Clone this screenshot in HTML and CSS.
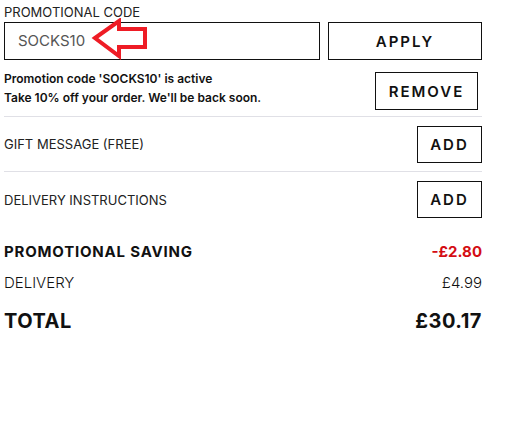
FILE: index.html
```html
<!DOCTYPE html>
<html>
<head>
<meta charset="utf-8">
<link rel="stylesheet" href="styles.css">
</head>
<body>
<div class="panel">
  <div class="promo">
    <div class="label">PROMOTIONAL CODE</div>
    <div class="promo-row">
      <div class="input-wrap">
        <div class="input">SOCKS10</div>
        <svg class="arrow" width="60" height="44" viewBox="0 0 60 44">
          <path d="M4 20 L28 3 L28 11 L54 11 L54 29 L28 29 L28 38 Z" fill="none" stroke="#ee1c25" stroke-width="4" stroke-linejoin="miter"/>
        </svg>
      </div>
      <button class="btn apply">APPLY</button>
    </div>
  </div>
  <div class="row active">
    <div class="active-text">
      <div>Promotion code 'SOCKS10' is active</div>
      <div>Take 10% off your order. We'll be back soon.</div>
    </div>
    <button class="btn remove">REMOVE</button>
  </div>
  <div class="row option">
    <span class="opt-label">GIFT MESSAGE (FREE)</span>
    <button class="btn add">ADD</button>
  </div>
  <div class="row option last">
    <span class="opt-label">DELIVERY INSTRUCTIONS</span>
    <button class="btn add">ADD</button>
  </div>
  <div class="summary">
    <div class="sum-row saving"><span>PROMOTIONAL SAVING</span><span class="red">-£2.80</span></div>
    <div class="sum-row delivery"><span>DELIVERY</span><span>£4.99</span></div>
    <div class="sum-row total"><span>TOTAL</span><span>£30.17</span></div>
  </div>
</div>
</body>
</html>
```
FILE: styles.css
```css
html, body {
  margin: 0;
  padding: 0;
  background: #fff;
}
body {
  font-family: Inter, "DejaVu Sans", sans-serif;
  color: #111;
}
.panel {
  width: 478px;
  margin-left: 4px;
}
.label {
  font-size: 13px;
  line-height: 16px;
  padding-top: 4px;
  height: 18px;
  color: #222;
}
.promo-row {
  display: flex;
  gap: 8px;
  height: 38px;
}
.input-wrap {
  position: relative;
  width: 316px;
}
.input {
  box-sizing: border-box;
  height: 38px;
  border: 1.5px solid #111;
  padding-left: 13px;
  font-size: 15px;
  line-height: 35px;
  color: #555;
}
.arrow {
  position: absolute;
  left: 87px;
  top: -4px;
}
.btn {
  box-sizing: border-box;
  background: #fff;
  border: 1.5px solid #111;
  font-family: Inter, "DejaVu Sans", sans-serif;
  font-weight: 600;
  color: #111;
  letter-spacing: 2px;
  padding: 0;
  margin: 0;
}
.apply {
  width: 154px;
  height: 38px;
  font-size: 15px;
}
.row {
  display: flex;
  align-items: center;
  justify-content: space-between;
  border-bottom: 1px solid #e0e0e6;
}
.active {
  box-sizing: border-box;
  align-items: flex-start;
  padding-top: 12px;
  height: 57px;
}
.active-text {
  font-size: 12px;
  font-weight: 600;
  line-height: 19px;
  margin-top: -3px;
}
.remove {
  width: 103px;
  height: 38px;
  font-size: 15px;
  margin-right: 4px;
}
.option {
  height: 55px;
  box-sizing: border-box;
}
.option.last {
  border-bottom: none;
}
.opt-label {
  font-size: 13px;
  color: #222;
}
.add {
  width: 65px;
  height: 37px;
  font-size: 15px;
}
.summary {
  padding-top: 8px;
}
.sum-row {
  display: flex;
  justify-content: space-between;
  align-items: center;
}
.saving {
  height: 32px;
  font-size: 15px;
  font-weight: 700;
}
.saving span:first-child {
  letter-spacing: 0.8px;
}
.red {
  color: #d40d14;
}
.delivery {
  height: 31px;
  font-size: 15px;
  font-weight: 300;
  color: #111;
}
.total {
  height: 46px;
  font-size: 20px;
  font-weight: 700;
  letter-spacing: 0.5px;
}
```
